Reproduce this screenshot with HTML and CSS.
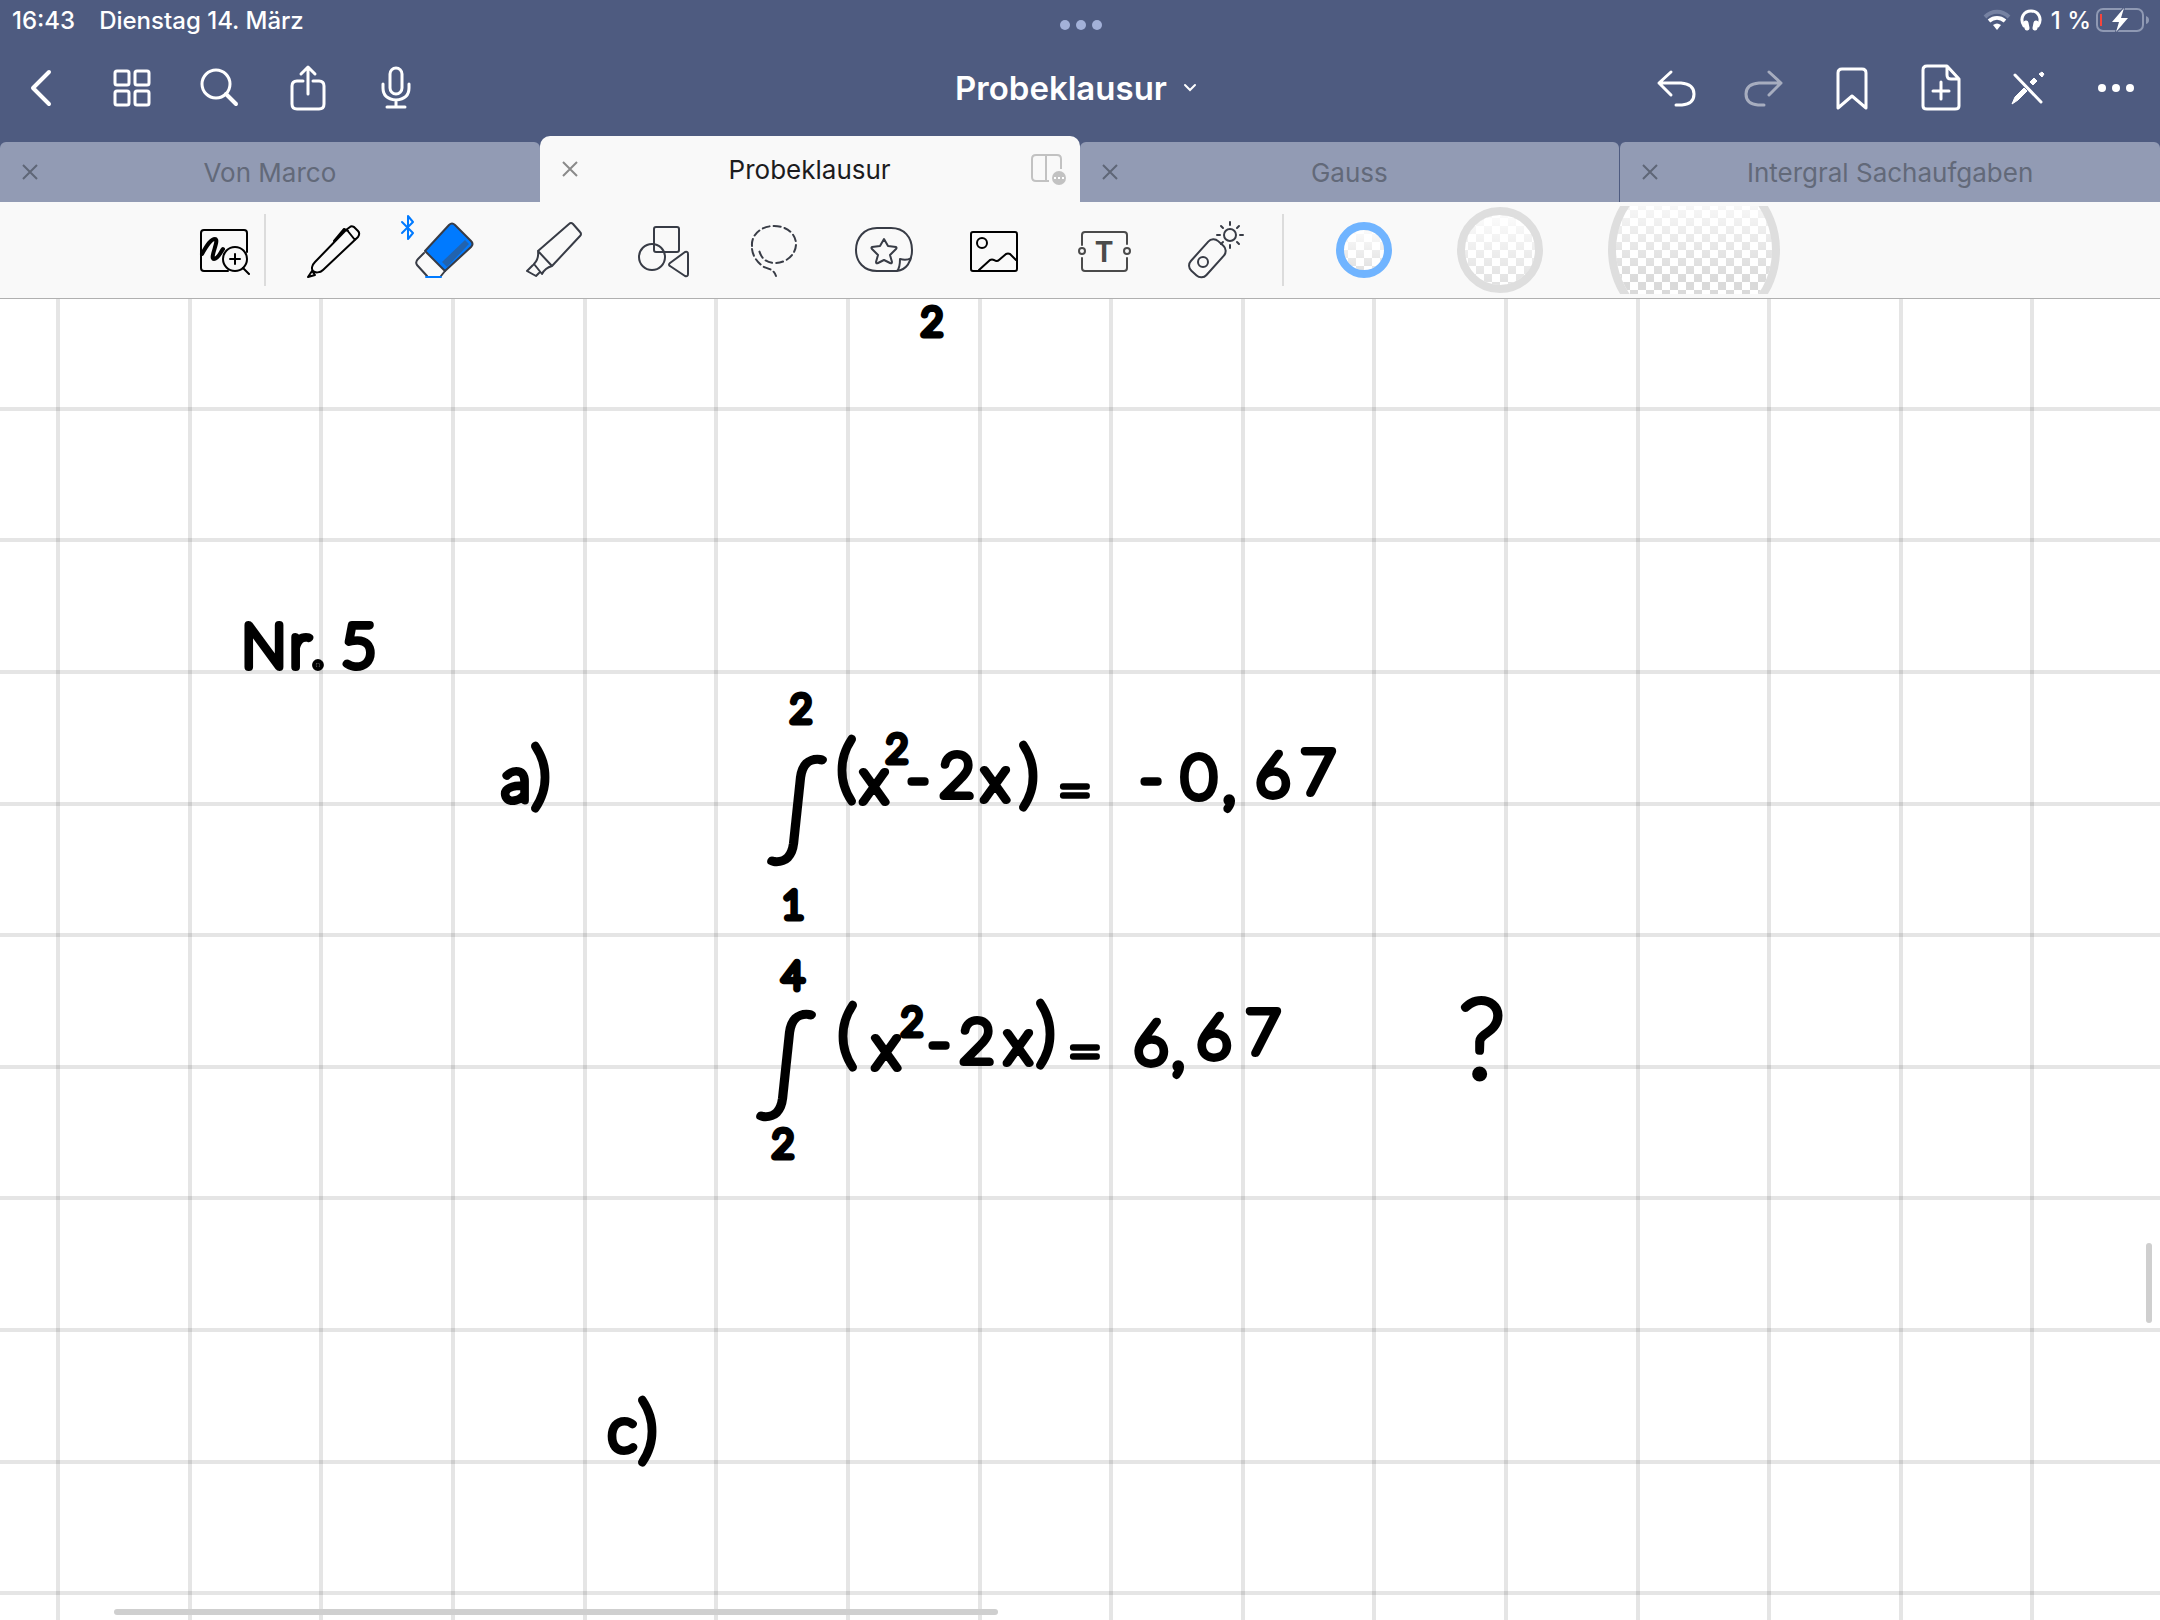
FILE: index.html
```html
<!DOCTYPE html>
<html lang="de">

<head>
    <meta charset="UTF-8" />
    <title>Probeklausur</title>
    <meta name="viewport" content="width=device-width, initial-scale=1" />
    <link rel="stylesheet" href="styles.css">
</head>

<body>
    <header class="header">
        <div class="status">
            <div class="status-left">
                <span>16:43</span>
                <span>Dienstag 14. März</span>
            </div>
            <svg class="multitask" width="42" height="10" viewBox="0 0 42 10">
                <circle cx="5" cy="5" r="5" />
                <circle cx="21" cy="5" r="5" />
                <circle cx="37" cy="5" r="5" />
            </svg>
            <div class="status-right">
                <svg width="28" height="22" viewBox="0 0 28 22" fill="none" stroke="#fff" stroke-width="4">
                    <path d="M2 8C9 1 19 1 26 8" stroke="#7682a2" />
                    <path d="M6 12c5-4 11-4 16 0" />
                    <path d="M10 16q4-3 8 0l-4 5z" fill="#fff" stroke="none" />
                </svg>
                <svg width="22" height="22" viewBox="0 0 22 22" fill="none" stroke="#fff" stroke-width="3" stroke-linecap="round">
                    <path d="M4 17C-1 9 4 2 11 2s12 7 7 15" />
                    <path d="M6 14l1 5M16 14l-1 5" stroke-width="5" />
                </svg>
                <span>1 %</span>
                <svg class="battery" width="54" height="26" viewBox="0 0 54 26" fill="none">
                    <rect x="1" y="2" width="46" height="22" rx="6" stroke="#8f99b3" stroke-width="2" />
                    <path d="M50 9q3 1 3 4t-3 4z" fill="#8f99b3" />
                    <path d="M5 7v12" stroke="#f5453d" stroke-width="2" />
                    <path d="M28 1L16 15h7l-3 10 12-14h-7z" fill="#fff" stroke="#4e5b80" stroke-width="2" paint-order="stroke" />
                </svg>
            </div>
        </div>

        <nav class="nav">
            <div class="nav-group">
                <button class="icon-btn" aria-label="Zurück">
                    <svg class="line" width="48" height="48" viewBox="0 0 48 48"><path d="M29 8L13 24l16 16" stroke-width="4" /></svg>
                </button>
                <button class="icon-btn" aria-label="Übersicht">
                    <svg class="line" width="48" height="48" viewBox="0 0 48 48">
                        <rect x="7" y="7" width="14" height="14" rx="2" />
                        <rect x="27" y="7" width="14" height="14" rx="2" />
                        <rect x="7" y="27" width="14" height="14" rx="2" />
                        <rect x="27" y="27" width="14" height="14" rx="2" />
                    </svg>
                </button>
                <button class="icon-btn" aria-label="Suchen">
                    <svg class="line" width="48" height="48" viewBox="0 0 48 48"><circle cx="20" cy="20" r="14" /><path d="M30 30l10 10" stroke-width="4" /></svg>
                </button>
                <button class="icon-btn" aria-label="Teilen">
                    <svg class="line" width="48" height="48" viewBox="0 0 48 48"><path d="M19 17h-6q-5 0-5 5v18q0 5 5 5h22q5 0 5-5V22q0-5-5-5h-6M24 30V4M17 10l7-7 7 7" /></svg>
                </button>
                <button class="icon-btn" aria-label="Aufnehmen">
                    <svg class="line" width="48" height="48" viewBox="0 0 48 48">
                        <rect x="18" y="4" width="12" height="26" rx="6" />
                        <path d="M11 20v4q0 11 13 12 13-1 13-12v-4M24 36v6M15 43h18" />
                    </svg>
                </button>
            </div>
            <button class="doc-title">
                Probeklausur
                <svg width="14" height="10" viewBox="0 0 14 10" fill="none" stroke="#fff" stroke-width="2" stroke-linecap="round"><path d="M2 2l5 5 5-5" /></svg>
            </button>
            <div class="nav-group right">
                <button class="icon-btn" aria-label="Rückgängig">
                    <svg class="line" width="48" height="48" viewBox="0 0 48 48"><path d="M19 8L7 19l12 12M7 19h22q13 1 13 11t-12 11h-6" /></svg>
                </button>
                <button class="icon-btn" aria-label="Wiederholen" disabled>
                    <svg class="line" width="48" height="48" viewBox="0 0 48 48"><path d="M29 8l12 11-12 12M41 19H19Q6 20 6 30t12 11h6" /></svg>
                </button>
                <button class="icon-btn" aria-label="Lesezeichen">
                    <svg class="line" width="48" height="48" viewBox="0 0 48 48"><path d="M10 44V9q0-4 4-4h20q4 0 4 4v35L24 32z" /></svg>
                </button>
                <button class="icon-btn" aria-label="Seite hinzufügen">
                    <svg class="line" width="48" height="48" viewBox="0 0 48 48"><path d="M31 2H11q-4 0-4 4v36q0 3 4 3h28q4 0 4-3V15zM31 2v9q0 4 4 4h8M25 18v17M17 27h16" /></svg>
                </button>
                <button class="icon-btn" aria-label="Nur lesen">
                    <svg width="48" height="48" viewBox="0 0 48 48" stroke="#fff" fill="#fff">
                        <path d="M8 40l3-7 9-9 3 3-9 9zM26 18l4-4 3 3-4 4zM35 10l3-2 2 2-2 3z" stroke-linejoin="round" />
                        <path d="M11 11l26 27" stroke-width="3" stroke-linecap="round" />
                    </svg>
                </button>
                <button class="icon-btn" aria-label="Mehr">
                    <svg width="48" height="48" viewBox="0 0 48 48" fill="#fff"><circle cx="10" cy="24" r="4" /><circle cx="24" cy="24" r="4" /><circle cx="38" cy="24" r="4" /></svg>
                </button>
            </div>
        </nav>

        <div class="tabs">
            <div class="tab">
                <button class="tab-close" aria-label="Tab schließen"><svg width="16" height="16" viewBox="0 0 16 16"><path d="M1 1l14 14M15 1L1 15" /></svg></button>
                <button class="tab-title">Von Marco</button>
            </div>
            <div class="tab active">
                <button class="tab-close" aria-label="Tab schließen"><svg width="16" height="16" viewBox="0 0 16 16"><path d="M1 1l14 14M15 1L1 15" /></svg></button>
                <button class="tab-title">Probeklausur</button>
                <button class="tab-split" aria-label="Geteilte Ansicht">
                    <svg width="36" height="32" viewBox="0 0 36 32" fill="none" stroke="#c2c2c2" stroke-width="2">
                        <path d="M19 28H6q-4 0-4-4V6q0-4 4-4h21q4 0 4 4v10M16 2v26" />
                        <circle cx="29" cy="25" r="7" fill="#c2c2c2" stroke="none" />
                        <path d="M24 25h2M28 25h2M32 25h2" stroke="#fff" />
                    </svg>
                </button>
            </div>
            <div class="tab">
                <button class="tab-close" aria-label="Tab schließen"><svg width="16" height="16" viewBox="0 0 16 16"><path d="M1 1l14 14M15 1L1 15" /></svg></button>
                <button class="tab-title">Gauss</button>
            </div>
            <div class="tab">
                <button class="tab-close" aria-label="Tab schließen"><svg width="16" height="16" viewBox="0 0 16 16"><path d="M1 1l14 14M15 1L1 15" /></svg></button>
                <button class="tab-title">Intergral Sachaufgaben</button>
            </div>
        </div>
    </header>

    <div class="toolbar">
        <button class="tool zoom dark" aria-label="Zoomfenster">
            <svg width="60" height="60" viewBox="0 0 60 60">
                <path d="M53 32V13q0-3-3-3H10q-3 0-3 3v35q0 3 3 3h24" />
                <path d="M8 34C13 25 17 19 21 19c5 0-6 20-1 20 4 0 6-6 9-10" stroke-width="4" />
                <circle cx="41" cy="39" r="12" fill="#f9f9f9" />
                <path d="M49 48l6 6M36 39h10M41 34v10" />
            </svg>
        </button>
        <span class="divider"></span>
        <div class="tools">
            <button class="tool dark" aria-label="Stift">
                <svg width="60" height="60" viewBox="0 0 60 60"><path d="M42 10L11 42c-3 3-4 7-2 9s7 2 10-1L54 17c2-3 1-5 0-6l-4-4c-2-1-3-1-4 0zM43 10l8 10M30 21L40 9l4 2M8 51l-4 6 7-2-3-4" /></svg>
            </button>
            <button class="tool" aria-label="Radierer">
                <svg class="bluetooth" width="16" height="28" viewBox="0 0 16 28"><path d="M2 8l11 11-5 6V2l5 6L2 19" /></svg>
                <svg width="60" height="60" viewBox="0 0 60 60">
                    <path d="M10 33l-6 6q-3 3-1 6l10 11M27 56l4-5" />
                    <path d="M11 31L35 5q3-3 6 0l16 16q3 3 0 6L31 51z" fill="#007aff" />
                    <path d="M28 42l23-22 4 4-22 23z" fill="#2263ae" stroke="none" />
                    <path d="M12 57h15" stroke="#007aff" />
                </svg>
            </button>
            <button class="tool" aria-label="Textmarker">
                <svg width="60" height="60" viewBox="0 0 60 60"><path d="M14 31L45 4q2-2 4 0l7 8q2 2 0 4L28 46zM14 31q1 8-4 13l8 10q3-6 10-8M9 45l-6 6 9 5 3-3" /></svg>
            </button>
            <button class="tool" aria-label="Formen">
                <svg width="60" height="60" viewBox="0 0 60 60"><rect x="20" y="7" width="25" height="25" rx="2" /><circle cx="18" cy="37" r="13" /><path d="M36 43l15-11q3-1 3 2v20q0 3-3 2L36 46q-2-1 0-3z" /></svg>
            </button>
            <button class="tool" aria-label="Lasso">
                <svg width="60" height="60" viewBox="0 0 60 60"><path d="M8 26C7 14 18 6 30 6c13 0 22 8 22 18s-9 19-21 19c-9 0-14-5-16-13M8 29c1 8 6 14 12 18 6 2 10 3 12 9" stroke-dasharray="7 4" /></svg>
            </button>
            <button class="tool" aria-label="Sticker">
                <svg width="60" height="60" viewBox="0 0 60 60">
                    <path d="M43 51H23C10 51 2 42 2 30S10 8 23 8h14c13 0 21 9 21 22 0 12-6 20-15 21 3-3 3-7 3-12 4 1 8 1 11-1" />
                    <path d="M30 19l4 7 8 1q1 1 0 2l-6 6 2 7q0 2-2 1l-6-3-6 3q-2 1-2-1l2-7-6-6q-1-1 0-2l8-1z" />
                </svg>
            </button>
            <button class="tool dark" aria-label="Bild">
                <svg width="60" height="60" viewBox="0 0 60 60"><rect x="7" y="12" width="46" height="39" rx="2" /><circle cx="18" cy="23" r="5" /><path d="M15 50l11-10q2-1 4 0 3 2 5 0l7-6q2-1 4 0l6 6" /></svg>
            </button>
            <button class="tool text-tool" aria-label="Text">
                <svg width="60" height="60" viewBox="0 0 60 60">
                    <path d="M8 25V15q0-3 3-3h39q3 0 3 3v9M8 38v10q0 3 3 3h39q3 0 3-3V38" />
                    <circle cx="8" cy="31" r="3" /><circle cx="53" cy="31" r="3" />
                    <text x="30" y="42">T</text>
                </svg>
            </button>
            <button class="tool" aria-label="Laserpointer">
                <svg width="60" height="60" viewBox="0 0 60 60">
                    <rect x="13" y="18" width="21" height="40" rx="7" transform="rotate(42 23 38)" />
                    <circle cx="19" cy="42" r="5" /><circle cx="46" cy="15" r="6" />
                    <path d="M46 2v3M46 25v3M33 15h3M56 15h3M37 6l2 2M53 22l2 2M37 24l2-2M53 8l2-2" />
                </svg>
            </button>
        </div>
        <span class="divider"></span>
        <div class="sizes">
            <button class="size small selected" aria-label="Klein"></button>
            <button class="size medium" aria-label="Mittel"></button>
            <button class="size large" aria-label="Groß"></button>
        </div>
    </div>

    <main class="paper">
        <svg class="page" width="100%" height="100%">
            <g class="grid">
                <path d="M58 0v3000M190 0v3000M321 0v3000M453 0v3000M585 0v3000M716 0v3000M848 0v3000M980 0v3000M1111 0v3000M1243 0v3000M1374 0v3000M1506 0v3000M1638 0v3000M1769 0v3000M1901 0v3000M2032 0v3000" />
                <path d="M0 110h4000M0 241h4000M0 373h4000M0 505h4000M0 636h4000M0 768h4000M0 899h4000M0 1031h4000M0 1163h4000M0 1294h4000" />
            </g>
            <g class="ink">
                <text class="tiny" x="932" y="36">2</text>

                <text x="264" y="368">N</text>
                <text x="300" y="368">r</text>
                <text x="318" y="368">.</text>
                <text x="359" y="368">5</text>

                <text x="516" y="502">a</text>
                <text class="bracket" x="541" y="501">)</text>

                <text class="tiny" x="801" y="423">2</text>
                <text class="integral" x="797" y="544">∫</text>
                <text class="tiny" x="793" y="619">1</text>
                <text class="bracket" x="846" y="494">(</text>
                <text x="874" y="503">x</text>
                <text class="tiny" x="897" y="463">2</text>
                <text x="918" y="500">-</text>
                <text x="957" y="497">2</text>
                <text x="995" y="501">x</text>
                <text class="bracket" x="1029" y="500">)</text>
                <text class="equals" x="1075" y="512">=</text>
                <text x="1151" y="500">-</text>
                <text x="1199" y="499">0</text>
                <text x="1229" y="503">,</text>
                <text x="1273" y="497">6</text>
                <text x="1318" y="494">7</text>

                <text class="tiny" x="793" y="690">4</text>
                <text class="integral" x="786" y="799">∫</text>
                <text class="tiny" x="783" y="858">2</text>
                <text class="bracket" x="847" y="760">(</text>
                <text x="886" y="769">x</text>
                <text class="tiny" x="912" y="736">2</text>
                <text x="939" y="764">-</text>
                <text x="977" y="763">2</text>
                <text x="1018" y="764">x</text>
                <text class="bracket" x="1046" y="758">)</text>
                <text class="equals" x="1085" y="773">=</text>
                <text x="1151" y="765">6</text>
                <text x="1178" y="769">,</text>
                <text x="1214" y="759">6</text>
                <text x="1263" y="754">7</text>
                <text class="question" x="1482" y="778">?</text>

                <text x="622" y="1152">c</text>
                <text class="bracket" x="648" y="1155">)</text>
            </g>
        </svg>
        <span class="scroll-y"></span>
        <span class="scroll-x"></span>
    </main>
</body>

</html>
```

FILE: styles.css
```css
* {
    box-sizing: border-box;
}

body {
    margin: 0;
    min-height: 100vh;
    display: flex;
    flex-direction: column;
    font-family: Inter, "Liberation Sans", sans-serif;
    background: white;
}

button {
    padding: 0;
    border: none;
    background: none;
    color: inherit;
    font: inherit;
    cursor: pointer;
}

svg {
    display: block;
}

.header {
    background: #4e5b80;
    color: white;
}

/* Status bar */
.status {
    display: grid;
    grid-template-columns: 1fr auto 1fr;
    align-items: center;
    height: 40px;
    padding: 0 10px 0 12px;
    font-size: 24px;
    font-weight: 500;
}

.status-left {
    display: flex;
    gap: 24px;
}

.status-right {
    display: flex;
    align-items: center;
    justify-content: flex-end;
    gap: 9px;
}

.battery {
    margin-left: -4px;
}

.multitask {
    fill: #a3b1d8;
    margin-top: 10px;
}

/* Navigation */
.nav {
    display: grid;
    grid-template-columns: 1fr auto 1fr;
    align-items: center;
    height: 96px;
}

.nav-group {
    display: flex;
}

.right {
    justify-content: flex-end;
}

.icon-btn {
    display: flex;
    align-items: center;
    justify-content: center;
    width: 88px;
    height: 88px;
}

.icon-btn:disabled {
    opacity: 0.5;
}

.line {
    fill: none;
    stroke: white;
    stroke-width: 3;
    stroke-linecap: round;
    stroke-linejoin: round;
}

.doc-title {
    display: flex;
    align-items: center;
    gap: 16px;
    padding-right: 8px;
    font-size: 33px;
    font-weight: 600;
}

/* Tabs */
.tabs {
    display: flex;
    align-items: flex-end;
    height: 66px;
}

.tab {
    display: grid;
    grid-template-columns: 60px 1fr 60px;
    flex: 1;
    height: 60px;
    background: #929bb4;
    color: #626979;
    border-radius: 6px 6px 0 0;
    font-size: 26px;
}

.tab + .tab:last-child {
    border-left: 1px solid #4e5b80;
}

.tab.active {
    height: 66px;
    background: #f9f9f9;
    color: #1c1c1e;
    border-radius: 10px 10px 0 0;
}

.tab-close,
.tab-split {
    display: flex;
    align-items: center;
    justify-content: center;
}

.tab-split {
    padding-right: 4px;
}

.tab-close path {
    stroke: #5f6677;
    stroke-width: 2;
}

.active .tab-close path {
    stroke: #8a8a8a;
}

/* Toolbar */
.toolbar {
    display: flex;
    align-items: center;
    height: 97px;
    padding-left: 184px;
    border-bottom: 1px solid #b0b0b0;
    background: #f9f9f9;
}

.tools {
    display: flex;
    margin: 0 13px;
}

.tool {
    position: relative;
    display: flex;
    align-items: center;
    justify-content: center;
    width: 110px;
    height: 96px;
    fill: none;
    stroke: #383c46;
    stroke-width: 2;
    stroke-linecap: round;
    stroke-linejoin: round;
}

.tool.dark {
    stroke: black;
}

.tool.zoom {
    width: 80px;
}

.text-tool {
    stroke: #4b4b4b;
}

.text-tool text {
    fill: #4b4b4b;
    stroke: none;
    font-size: 28px;
    font-weight: 700;
    text-anchor: middle;
}

.bluetooth {
    position: absolute;
    left: 11px;
    top: 12px;
    stroke: #007aff;
}

.divider {
    width: 2px;
    height: 72px;
    background: #dcdcdc;
}

.sizes {
    display: flex;
    align-items: center;
    gap: 65px;
    height: 88px;
    margin-left: 52px;
    overflow: hidden;
}

.size {
    flex: none;
    border: 8px solid #dedede;
    border-radius: 50%;
    background:
        linear-gradient(rgba(255, 255, 255, 0.9), rgba(255, 255, 255, 0.2)) padding-box,
        repeating-conic-gradient(#dadada 0 25%, white 0 50%) center / 16px 16px padding-box;
}

.small {
    width: 56px;
    height: 56px;
}

.medium {
    width: 86px;
    height: 86px;
}

/* taller than the bar, so only the middle of the fade is visible */
.large {
    width: 172px;
    height: 172px;
    background:
        linear-gradient(rgba(255, 255, 255, 0.8) 20%, rgba(255, 255, 255, 0) 70%) padding-box,
        repeating-conic-gradient(#dadada 0 25%, white 0 50%) center / 16px 16px padding-box;
}

.selected {
    border-color: #70b4ff;
}

/* Squared paper */
.paper {
    position: relative;
    flex: 1;
    overflow: hidden;
}

.page {
    position: absolute;
    inset: 0;
    overflow: visible;
}

.grid {
    fill: none;
    stroke: rgba(0, 0, 0, 0.1);
    stroke-width: 4;
}

.ink {
    fill: black;
    stroke: black;
    stroke-width: 8;
    stroke-linecap: round;
    stroke-linejoin: round;
    font-family: Lato, "Open Sans", sans-serif;
    font-size: 60px;
    font-weight: 100;
    text-anchor: middle;
}

.tiny {
    font-size: 38px;
    stroke-width: 7;
}

.bracket {
    font-size: 72px;
}

.equals {
    stroke-width: 6;
}

.integral {
    font-size: 104px;
}

.question {
    font-size: 108px;
}

/* Scroll indicators */
.scroll-y,
.scroll-x {
    position: absolute;
    border-radius: 3px;
    background: #cfcfcf;
}

.scroll-y {
    right: 8px;
    top: 944px;
    width: 6px;
    height: 80px;
}

.scroll-x {
    left: 114px;
    bottom: 5px;
    width: 884px;
    height: 6px;
}
```
